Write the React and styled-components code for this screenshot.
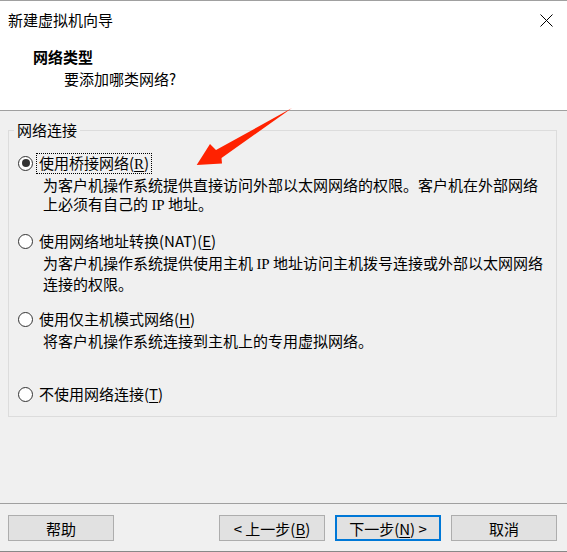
import React from 'react';
import styled, { createGlobalStyle } from 'styled-components';

const GlobalStyle = createGlobalStyle`
  html, body {
    margin: 0;
    padding: 0;
    background: #f0f0f0;
  }
  body {
    font-family: "Noto Sans CJK SC", "Noto Sans", sans-serif;
    font-size: 15px;
    color: #000;
  }
`;

const Window = styled.div`
  position: relative;
  width: 567px;
  height: 552px;
  box-sizing: border-box;
  border-top: 1px solid #a0a0a0;
  display: flex;
  flex-direction: column;
  background: #f0f0f0;
  overflow: hidden;
`;

const TitleBar = styled.div`
  height: 38px;
  display: flex;
  align-items: center;
  justify-content: space-between;
  padding: 0 14px 0 8px;
  background: #fff;
  line-height: 38px;
`;

const CloseButton = styled.div`
  width: 13px;
  height: 13px;
  display: flex;
  svg {
    display: block;
  }
`;

const Header = styled.div`
  background: #fff;
  padding: 7px 0 20px;
  border-bottom: 1px solid #a0a0a0;
`;

const Heading = styled.div`
  font-weight: bold;
  line-height: 22px;
  padding-left: 33px;
`;

const SubHeading = styled.div`
  line-height: 22px;
  padding-left: 64px;
`;

const Body = styled.div`
  flex: 1;
  padding: 9px 10px 0 8px;
`;

const GroupBox = styled.fieldset`
  margin: 0;
  border: 1px solid #dcdcdc;
  padding: 13px 8px 12px 9px;
  display: flex;
  flex-direction: column;
`;

const Legend = styled.legend`
  margin-left: -4px;
  padding: 0 3px;
  line-height: 20px;
`;

const Option = styled.div`
  height: ${p => p.$height}px;
  display: flex;
  flex-direction: column;
`;

const RadioRow = styled.div`
  height: 20px;
  display: flex;
  align-items: center;
`;

const Radio = styled.span`
  box-sizing: border-box;
  width: 15px;
  height: 15px;
  border-radius: 50%;
  border: 1px solid #333;
  background: #fff;
  margin: 0 3px 0 0;
  display: flex;
  align-items: center;
  justify-content: center;

  &::after {
    content: '';
    width: 8px;
    height: 8px;
    border-radius: 50%;
    background: ${p => (p.$checked ? '#333' : 'transparent')};
  }
`;

const Label = styled.span`
  line-height: 18px;
  padding: 0 2px;
  border: 1px dotted ${p => (p.$focused ? '#000' : 'transparent')};
  white-space: nowrap;
`;

const Key = styled.span`
  text-decoration: underline;
  text-underline-offset: 2px;
`;

const Desc = styled.div`
  margin: 2px 0 0 25px;
  line-height: 19px;
  white-space: nowrap;
`;

const Serif = styled.span`
  font-family: "Liberation Serif", serif;
`;

const Footer = styled.div`
  border-top: 1px solid #a0a0a0;
  border-bottom: 1px solid #888;
  padding: 11px 10px 10px 8px;
  display: flex;
  gap: 10px;
`;

const Spacer = styled.div`
  flex: 1;
`;

const Button = styled.div`
  box-sizing: border-box;
  width: 106px;
  height: 26px;
  display: flex;
  align-items: center;
  justify-content: center;
  background: #e1e1e1;
  border: ${p => (p.$primary ? '2px solid #0078d7' : '1px solid #adadad')};
  white-space: pre;
`;

const Arrow = styled.svg`
  position: absolute;
  left: 190px;
  top: 99px;
  pointer-events: none;
`;

export default function App() {
  return (
    <>
      <GlobalStyle />
      <Window>
        <TitleBar>
          <span>新建虚拟机向导</span>
          <CloseButton>
            <svg width="13" height="13" viewBox="0 0 13 13">
              <path d="M0.5 0.5 L12.5 12.5 M12.5 0.5 L0.5 12.5" stroke="#000" strokeWidth="1" />
            </svg>
          </CloseButton>
        </TitleBar>
        <Header>
          <Heading>网络类型</Heading>
          <SubHeading>要添加哪类网络?</SubHeading>
        </Header>
        <Body>
          <GroupBox>
            <Legend>网络连接</Legend>
            <Option $height={78}>
              <RadioRow>
                <Radio $checked />
                <Label $focused>
                  使用桥接网络(<Serif><Key>R</Key></Serif>)
                </Label>
              </RadioRow>
              <Desc>
                为客户机操作系统提供直接访问外部以太网网络的权限。客户机在外部网络
                <br />
                上必须有自己的 <Serif>IP</Serif> 地址。
              </Desc>
            </Option>
            <Option $height={78}>
              <RadioRow>
                <Radio />
                <Label>
                  使用网络地址转换(NAT)(<Key>E</Key>)
                </Label>
              </RadioRow>
              <Desc>
                为客户机操作系统提供使用主机 <Serif>IP</Serif> 地址访问主机拨号连接或外部以太网网络
                <br />
                连接的权限。
              </Desc>
            </Option>
            <Option $height={75}>
              <RadioRow>
                <Radio />
                <Label>
                  使用仅主机模式网络(<Key>H</Key>)
                </Label>
              </RadioRow>
              <Desc>将客户机操作系统连接到主机上的专用虚拟网络。</Desc>
            </Option>
            <RadioRow>
              <Radio />
              <Label>
                不使用网络连接(<Key>T</Key>)
              </Label>
            </RadioRow>
          </GroupBox>
        </Body>
        <Footer>
          <Button>帮助</Button>
          <Spacer />
          <Button>
            {'< 上一步('}<Key>B</Key>{')'}
          </Button>
          <Button $primary>
            {'下一步('}<Key>N</Key>{') >'}
          </Button>
          <Button>取消</Button>
        </Footer>
        <Arrow width="110" height="72" viewBox="0 0 110 72">
          <polygon
            points="6.7,65 20,44 26,50 102,8 31.5,58 32,63.5"
            fill="#ff2200"
          />
        </Arrow>
      </Window>
    </>
  );
}
